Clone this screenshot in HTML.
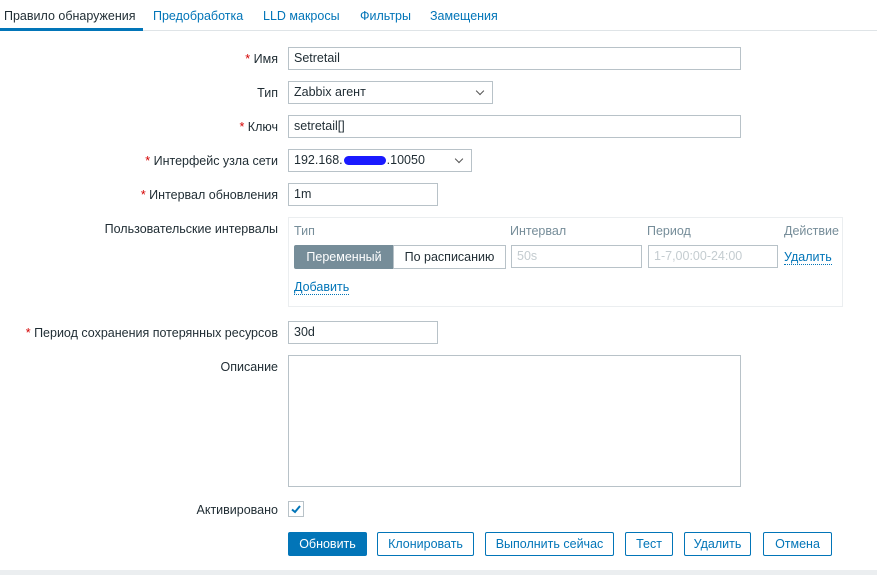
<!DOCTYPE html>
<html><head><meta charset="utf-8"><style>
*{box-sizing:border-box;margin:0;padding:0}
body{width:877px;height:575px;background:#fff;font-family:"Liberation Sans",Arial,sans-serif;font-size:12.5px;color:#1f2c33;position:relative;overflow:hidden}
.a{position:absolute;white-space:nowrap}
.tab{position:absolute;top:9px;color:#0275b8}
.lbl{position:absolute;right:599px;text-align:right;white-space:nowrap}
.req{color:#d40000}
.in{position:absolute;border:1px solid #b8c2c8;background:#fff;padding:0 5px;line-height:21px;height:23px}
.sel::after{content:"";position:absolute;right:9px;top:6px;width:5px;height:5px;border-right:1px solid #555;border-bottom:1px solid #555;transform:rotate(45deg)}
.btn{position:absolute;top:532px;height:24px;border:1px solid #0275b8;color:#0275b8;background:#fff;text-align:center;line-height:22px;border-radius:2px}
.lnk{color:#0275b8;border-bottom:1px dotted #0275b8}
.hd{position:absolute;top:224px;color:#768d99}
</style></head><body>
<div class="a" style="left:0;top:30px;width:877px;height:1px;background:#dfe4e7"></div>
<div class="a" style="left:0;top:28px;width:143px;height:3px;background:#0275b8"></div>
<div class="tab" style="left:4px;color:#1f2c33">Правило обнаружения</div>
<div class="tab" style="left:153px">Предобработка</div>
<div class="tab" style="left:263px">LLD макросы</div>
<div class="tab" style="left:360px">Фильтры</div>
<div class="tab" style="left:430px">Замещения</div>

<div class="lbl" style="top:52px"><span class="req">*</span> Имя</div>
<div class="in" style="left:288px;top:47px;width:453px">Setretail</div>
<div class="lbl" style="top:86px">Тип</div>
<div class="in sel" style="left:288px;top:81px;width:205px">Zabbix агент</div>
<div class="lbl" style="top:120px"><span class="req">*</span> Ключ</div>
<div class="in" style="left:288px;top:115px;width:453px">setretail[]</div>
<div class="lbl" style="top:154px"><span class="req">*</span> Интерфейс узла сети</div>
<div class="in sel" style="left:288px;top:149px;width:184px">192.168.<span style="display:inline-block;width:42px;height:9px;background:#1a1aff;border-radius:5px;vertical-align:middle;margin:0 1px"></span>.10050</div>
<div class="lbl" style="top:188px"><span class="req">*</span> Интервал обновления</div>
<div class="in" style="left:288px;top:183px;width:150px">1m</div>
<div class="lbl" style="top:222px">Пользовательские интервалы</div>
<div class="a" style="left:288px;top:217px;width:555px;height:90px;border:1px solid #ebeef0"></div>
<div class="hd" style="left:294px">Тип</div>
<div class="hd" style="left:510px">Интервал</div>
<div class="hd" style="left:647px">Период</div>
<div class="hd" style="left:784px">Действие</div>
<div class="a" style="left:294px;top:245px;width:100px;height:24px;background:#768d99;color:#fff;text-align:center;line-height:24px;border-radius:2px 0 0 2px">Переменный</div>
<div class="a" style="left:393px;top:245px;width:113px;height:24px;border:1px solid #b8c2c8;text-align:center;line-height:22px">По расписанию</div>
<div class="in" style="left:511px;top:245px;width:131px;color:#c4ccd0">50s</div>
<div class="in" style="left:648px;top:245px;width:130px;color:#c4ccd0">1-7,00:00-24:00</div>
<div class="a" style="left:784px;top:250px"><span class="lnk">Удалить</span></div>
<div class="a" style="left:294px;top:280px"><span class="lnk">Добавить</span></div>
<div class="lbl" style="top:326px"><span class="req">*</span> Период сохранения потерянных ресурсов</div>
<div class="in" style="left:288px;top:321px;width:150px">30d</div>
<div class="lbl" style="top:360px">Описание</div>
<div class="in" style="left:288px;top:355px;width:453px;height:132px"></div>
<div class="lbl" style="top:503px">Активировано</div>
<div class="a" style="left:288px;top:501px;width:16px;height:16px;border:1px solid #b8c2c8"><svg width="14" height="14" viewBox="0 0 14 14" style="position:absolute;left:0;top:0"><path d="M3 7.5 L6 10 L11 4" fill="none" stroke="#0275b8" stroke-width="2"/></svg></div>
<div class="btn" style="left:288px;width:79px;background:#0275b8;color:#fff">Обновить</div>
<div class="btn" style="left:377px;width:97px">Клонировать</div>
<div class="btn" style="left:485px;width:129px">Выполнить сейчас</div>
<div class="btn" style="left:625px;width:48px">Тест</div>
<div class="btn" style="left:684px;width:67px">Удалить</div>
<div class="btn" style="left:763px;width:69px">Отмена</div>
<div class="a" style="left:0;top:570px;width:877px;height:5px;background:#ebeef0"></div>
</body></html>
